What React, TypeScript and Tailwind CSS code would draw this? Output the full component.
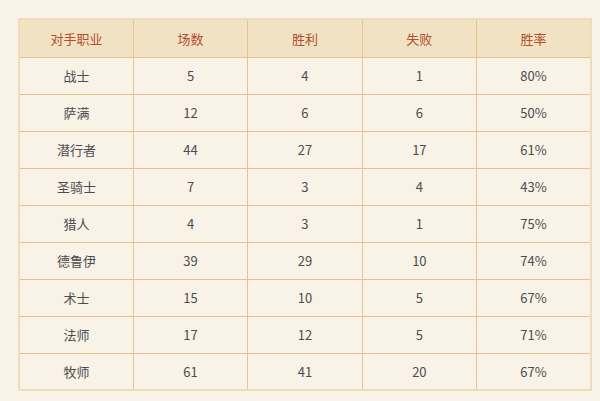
import React from "react";

const rows: [string, string, string, string, string][] = [
  ["战士", "5", "4", "1", "80%"],
  ["萨满", "12", "6", "6", "50%"],
  ["潜行者", "44", "27", "17", "61%"],
  ["圣骑士", "7", "3", "4", "43%"],
  ["猎人", "4", "3", "1", "75%"],
  ["德鲁伊", "39", "29", "10", "74%"],
  ["术士", "15", "10", "5", "67%"],
  ["法师", "17", "12", "5", "71%"],
  ["牧师", "61", "41", "20", "67%"],
];

const headers = ["对手职业", "场数", "胜利", "失败", "胜率"];

export default function App() {
  return (
    <div
      className="w-[600px] h-[401px] bg-[#f8f2e7] pt-[18px] pl-[18px]"
      style={{ fontFamily: '"Noto Sans CJK SC", "Noto Sans", sans-serif' }}
    >
      <table className="w-[574px] border-collapse border-2 border-[#efdcb9] text-[13px] table-fixed">
        <thead>
          <tr className="h-[38px] bg-[#f1e2c4]">
            {headers.map((h) => (
              <th
                key={h}
                className="border border-[#e4c38e] font-normal text-[#b2502e] text-center p-0"
              >
                {h}
              </th>
            ))}
          </tr>
        </thead>
        <tbody>
          {rows.map((r) => (
            <tr key={r[0]} className="h-[37px] bg-[#f8f2e7]">
              {r.map((c, i) => (
                <td
                  key={i}
                  className="border border-[#e4c38e] text-center text-[#4d4d4d] p-0"
                >
                  {c}
                </td>
              ))}
            </tr>
          ))}
        </tbody>
      </table>
    </div>
  );
}
